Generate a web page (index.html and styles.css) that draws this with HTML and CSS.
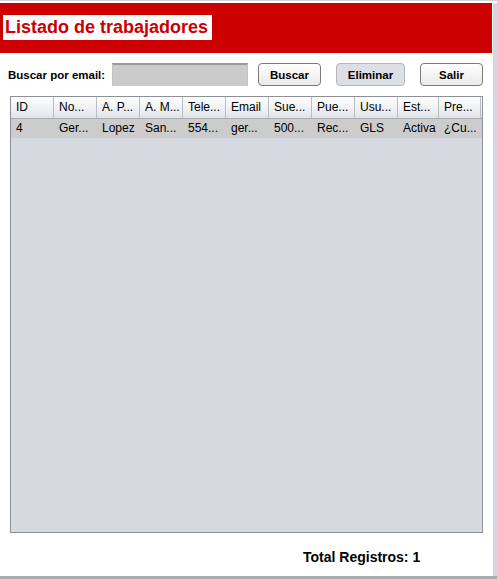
FILE: index.html
```html
<!DOCTYPE html>
<html lang="es">
<head>
<meta charset="utf-8">
<title>Listado de trabajadores</title>
<link rel="stylesheet" href="styles.css">
</head>
<body>
<div class="window">
  <div class="frame">
    <header class="banner">
      <h1 class="title">Listado de trabajadores</h1>
    </header>
    <div class="toolbar">
      <label class="label" for="email">Buscar por email:</label>
      <input id="email" class="field" type="text">
      <button class="btn btn-buscar">Buscar</button>
      <button class="btn btn-eliminar">Eliminar</button>
      <button class="btn btn-salir">Salir</button>
    </div>
    <div class="table">
      <div class="row head">
        <div class="cell">ID</div>
        <div class="cell">No...</div>
        <div class="cell">A. P...</div>
        <div class="cell">A. M...</div>
        <div class="cell">Tele...</div>
        <div class="cell">Email</div>
        <div class="cell">Sue...</div>
        <div class="cell">Pue...</div>
        <div class="cell">Usu...</div>
        <div class="cell">Est...</div>
        <div class="cell">Pre...</div>
      </div>
      <div class="row data">
        <div class="cell">4</div>
        <div class="cell">Ger...</div>
        <div class="cell">Lopez</div>
        <div class="cell">San...</div>
        <div class="cell">554...</div>
        <div class="cell">ger...</div>
        <div class="cell">500...</div>
        <div class="cell">Rec...</div>
        <div class="cell">GLS</div>
        <div class="cell">Activa</div>
        <div class="cell">¿Cu...</div>
      </div>
    </div>
    <div class="footer">Total Registros: 1</div>
  </div>
</div>
</body>
</html>
```
FILE: styles.css
```css
* { box-sizing: border-box; }
html, body { margin: 0; padding: 0; }
body {
  width: 497px;
  height: 579px;
  background: #ffffff;
  font-family: "Liberation Sans", Arial, sans-serif;
  overflow: hidden;
}
.window {
  width: 497px;
  height: 579px;
  border-top: 1px solid #d4d4d4;
  border-bottom: 3px solid #a9abaf;
  padding-top: 2px;
  display: flex;
}
.frame {
  border-right: 4px solid #d5d8df;
  width: 497px;
  display: flex;
  flex-direction: column;
}
.banner {
  background: #cc0000;
  height: 50px;
  width: 492px;
  padding: 12px 0 0 3px;
}
.title {
  margin: 0;
  display: inline-block;
  background: #ffffff;
  color: #cc0000;
  font-size: 18px;
  font-weight: bold;
  line-height: 25px;
  padding: 0 4px 0 2px;
  white-space: nowrap;
}
.toolbar {
  display: flex;
  align-items: center;
  height: 23px;
  margin-top: 10px;
  padding-left: 8px;
}
.label {
  font-size: 11.5px;
  font-weight: bold;
  color: #000;
  width: 104px;
}
.field {
  width: 136px;
  height: 23px;
  margin: 0;
  border: none;
  border-top: 2px solid #9a9a9a;
  border-left: 1px solid #c4c4c4;
  border-right: 1px solid #c4c4c4;
  background: #cbcbcb;
}
.btn {
  height: 23px;
  margin: 0;
  font-family: "Liberation Sans", Arial, sans-serif;
  font-size: 11.5px;
  font-weight: bold;
  color: #000;
  border: 1px solid #7a7a7a;
  border-radius: 4px;
  background: linear-gradient(#ffffff, #e9e9e9);
  padding: 0;
}
.btn-buscar { width: 63px; margin-left: 10px; }
.btn-eliminar {
  width: 69px;
  margin-left: 15px;
  background: #dcdfe5;
  border-color: #b3b6bc;
}
.btn-salir { width: 63px; margin-left: 15px; }
.table {
  margin: 10px 0 0 10px;
  width: 473px;
  height: 437px;
  border: 1px solid #8e9097;
  background: #d6d9e0;
}
.row {
  display: grid;
  grid-template-columns: 43px 43px 43px 43px 43px 43px 43px 43px 43px 41px 42px;
}
.head {
  height: 22px;
  background: linear-gradient(#ffffff, #e2e4e8);
  border-bottom: 1px solid #a8abb2;
}
.head .cell {
  border-right: 1px solid #b9bcc2;
  line-height: 21px;
}
.data {
  height: 19px;
  background: #cccccc;
}
.data .cell { line-height: 19px; }
.cell {
  font-size: 12px;
  color: #000;
  padding-left: 5px;
  white-space: nowrap;
  overflow: hidden;
}
.footer {
  margin-top: 16px;
  padding-left: 303px;
  font-size: 14px;
  font-weight: bold;
  color: #000;
}
```
